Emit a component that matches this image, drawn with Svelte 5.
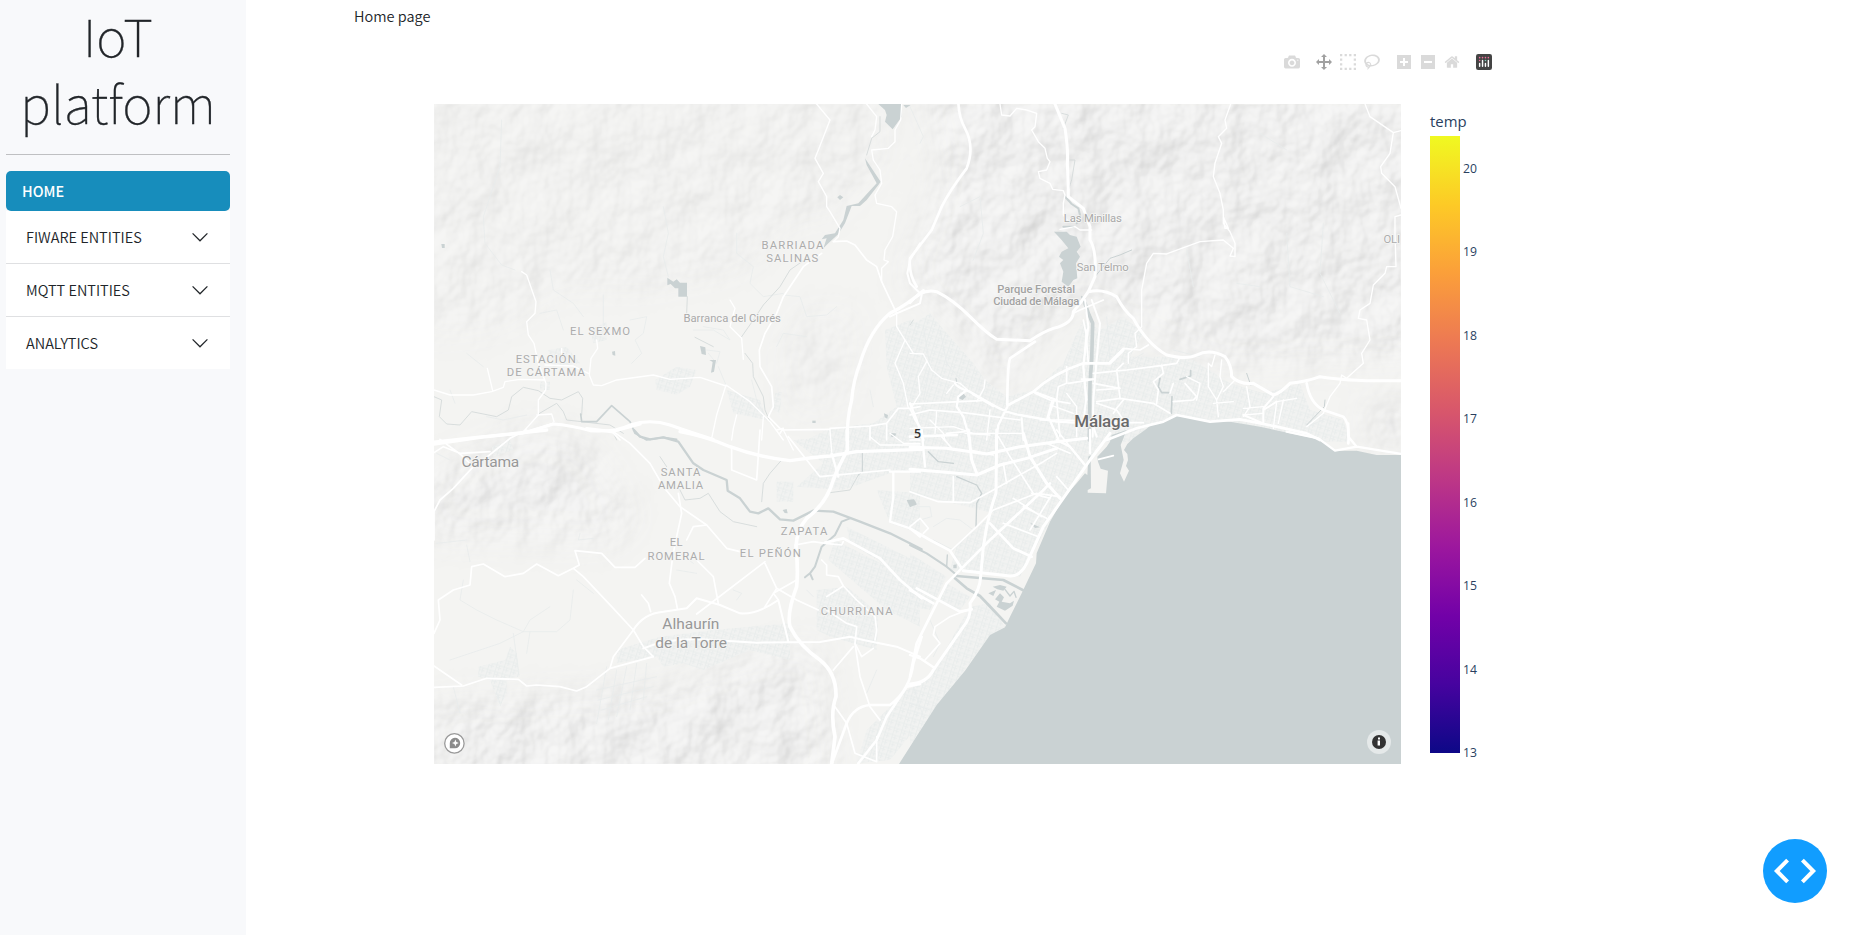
<script>
  const entries = ['FIWARE ENTITIES', 'MQTT ENTITIES', 'ANALYTICS'];
  const ticks = [20, 19, 18, 17, 16, 15, 14, 13];

  const flip = 'matrix(1 0 0 -1 0 850)';
  const tools = [
    [
      { name: 'Download plot', w: 1000, d: 'm500 450c-83 0-150-67-150-150 0-83 67-150 150-150 83 0 150 67 150 150 0 83-67 150-150 150z m400 150h-120c-16 0-34 13-39 29l-31 93c-6 15-23 28-40 28h-340c-16 0-34-13-39-28l-31-94c-6-15-23-28-40-28h-120c-55 0-100-45-100-100v-450c0-55 45-100 100-100h800c55 0 100 45 100 100v450c0 55-45 100-100 100z m-400-550c-138 0-250 112-250 250 0 138 112 250 250 250 138 0 250-112 250-250 0-138-112-250-250-250z m365 380c-19 0-35 16-35 35 0 19 16 35 35 35 19 0 35-16 35-35 0-19-16-35-35-35z' }
    ],
    [
      { name: 'Pan', w: 1000, on: true, d: 'm1000 350l-187 188 0-125-250 0 0 250 125 0-188 187-187-187 125 0 0-250-250 0 0 125-188-188 186-187 0 125 252 0 0-250-125 0 187-188 188 188-125 0 0 250 250 0 0-126 187 188z' },
      { name: 'Box select', w: 1000, d: 'm0 850l0-143 143 0 0 143-143 0z m286 0l0-143 143 0 0 143-143 0z m285 0l0-143 143 0 0 143-143 0z m286 0l0-143 143 0 0 143-143 0z m-857-286l0-143 143 0 0 143-143 0z m857 0l0-143 143 0 0 143-143 0z m-857-285l0-143 143 0 0 143-143 0z m857 0l0-143 143 0 0 143-143 0z m-857-286l0-143 143 0 0 143-143 0z m286 0l0-143 143 0 0 143-143 0z m285 0l0-143 143 0 0 143-143 0z m286 0l0-143 143 0 0 143-143 0z' },
      { name: 'Lasso select', w: 1031, d: 'm1018 538c-36 207-290 336-568 286-277-48-473-256-436-463 10-57 36-108 76-151-13-66 11-137 68-183 34-28 75-41 114-42l-55-70 0 0c-2-1-3-2-4-3-10-14-8-34 5-45 14-11 34-8 45 4 1 1 2 3 2 5l0 0 113 140c16 11 31 24 45 40 4 3 6 7 8 11 48-3 100 0 151 9 278 48 473 255 436 462z m-624-379c-80 14-149 48-197 96 42 42 109 47 156 9 33-26 47-66 41-105z m-187-74c-19 16-33 37-39 60 50-32 109-55 174-68-42-25-95-24-135 8z m360 75c-34-7-69-9-102-8 8 62-16 128-68 170-73 59-175 54-244-5-9 20-16 40-20 61-28 159 121 317 333 354s407-60 434-217c28-159-121-318-333-355z' }
    ],
    [
      { name: 'Zoom in', w: 875, d: 'm1 787l0-875 875 0 0 875-875 0z m687-500l-187 0 0-187-125 0 0 187-188 0 0 125 188 0 0 187 125 0 0-187 187 0 0-125z' },
      { name: 'Zoom out', w: 875, d: 'm0 788l0-876 875 0 0 876-875 0z m688-500l-500 0 0 125 500 0 0-125z' },
      { name: 'Reset view', w: 928.6, d: 'm786 296v-267q0-15-11-26t-25-10h-214v214h-143v-214h-214q-15 0-25 10t-11 26v267q0 1 0 2t0 2l321 264 321-264q1-1 1-4z m124 39l-34-41q-5-5-12-6h-2q-7 0-12 3l-386 322-386-322q-7-4-13-4-7 2-12 7l-35 41q-4 5-3 13t6 12l401 334q18 15 42 15t43-15l136-114v109q0 8 5 13t13 5h107q8 0 13-5t5-13v-227l122-102q5-5 6-12t-4-13z' }
    ]
  ];

  // Map quadrants. Each holds its own origin; geometry is stored at 3 units per pixel.
  const quads = [
    {
      x: 430, y: 100,
      urban: [
        'M1365 690L1440 660 1470 670V1020H1130L1200 985 1330 970 1400 920 1370 800Z',
        'M675 840L740 800 800 810 780 860 740 885 680 870Z',
        'M890 870L990 900 1010 960 910 940Z', 'M355 750L410 740 450 790 370 800Z',
        'M480 690L530 665 530 720 490 730Z', 'M1035 880L1055 875 1050 940 1030 930Z', 'M330 845H360V870H330Z'
      ],
      water: [
        'M1345 12L1413 12 1415 50 1388 88 1365 65 1370 45 1365 30ZM1420 15H1442L1428 24Z',
        'M712 533L730 545 740 538 750 548 771 548V590H745V565H735L722 552 712 556Z',
        'M1305 175L1352 245 1345 255 1310 300 1290 318 1265 318 1245 370 1225 402 1195 430 1180 445 1190 415 1175 418 1185 405 1215 400 1240 360 1250 318 1285 310 1340 250 1310 195Z',
        'M810 738L826 742 828 765 815 762Z', 'M838 780H858L852 815 843 818 848 786Z',
        'M546 755L555 753 556 767 548 765Z', 'M34 432H44V444H36Z', 'M1222 292L1230 285 1240 292 1230 300Z',
        'M1362 940L1374 945 1372 956 1364 952Z', 'M1147 962H1157V969H1147Z', 'M1383 1000L1398 1003 1394 1012 1384 1010Z'
      ],
      river: [
        [5, 'M452 942L455 965 500 965 545 917 600 965 615 1000 650 1020 700 1012 740 1018']
      ],
      stream: [
        'M12 890L35 900 28 950 50 972 90 975 125 935 200 950 235 930 245 890 280 862 325 872 360 895 395 900 445 875 458 895 455 945',
        'M320 945L380 910 400 935 410 960 455 965 540 975 580 1000',
        'M795 712L850 740M1130 475L1080 510 1050 560 1000 615 970 660 935 710M945 760L968 790 970 830 1000 890 1005 930 1020 965M772 590L770 640M1350 50V95L1325 115 1310 165'
      ],
      lane: [
        'M215 60L210 200 160 350 165 430 215 495 255 510M360 510L370 570 430 610 460 650M520 585V690M600 660L650 650 640 700 615 720 635 760 605 790M700 320L715 400 700 470 715 530M920 400V460L970 500 960 550 1000 590 1060 580M1060 585L1110 590 1130 650 1190 645 1220 620M75 910L60 870M170 950L220 960 290 945M790 690L850 690 900 720 880 690 820 680M865 800L888 855M965 840L980 900 1010 960M110 760L160 800M330 640L380 630 400 690',
        'M1040 740L1060 700 1130 710M1320 870L1330 920M1440 20L1480 110 1470 130M830 750L870 755 860 790 835 760'
      ],
      minor: [
        [4, 'M275 515L290 525 318 605 315 640 290 665 295 705 312 730 325 790 348 850 347 870 325 900 325 945 280 995M12 870L60 885 130 885 185 875 220 862 225 845 270 838 345 840M172 805L188 872'],
        [4, 'M320 945L365 942 372 965M345 795L430 798 475 820M500 720L503 745 483 775 478 825 490 855 515 857 560 840 670 825 720 838 810 832 888 858'],
        [4, 'M888 855L860 945 845 1015M888 855L960 905 1020 965 1060 1020M1000 950L995 1020'],
        [4, 'M1160 12L1200 60 1165 150 1155 175 1180 220 1165 245 1190 290 1190 320 1200 335 1230 385 1225 410 1210 425'],
        [5, 'M1210 425L1250 423 1275 435 1310 480 1340 500 1355 545 1400 640M1175 460L1120 500 1060 590 1040 640 1005 700 988 750 990 800 1025 860 1030 920 1015 950 1055 990 1200 988'],
        [4, 'M1310 12L1340 50 1335 90 1325 110M1415 12L1412 60 1395 90V125L1375 145 1325 150 1330 180 1350 210 1355 250 1335 285 1340 310 1385 320 1400 335 1388 410 1365 450 1362 480 1375 485 1355 505 1355 545'],
        [4, 'M900 600L915 625 905 660 900 680 935 715 940 778M920 945L910 985 905 1020M395 745V765M1400 640L1400 680 1450 760M1425 720L1395 790 1420 850 1435 925'],
        [5, 'M275 1000L370 970M545 995L570 1020M1200 985L1320 978 1370 970 1405 925 1440 925 1470 920M1440 925L1455 960 1470 980M1370 970V1020M1320 980V1020M1040 990L1060 985 1050 1000']
      ],
      major: [
        [9, 'M12 1026L140 1012 275 1000Q330 985 370 972Q420 975 480 992Q550 998 600 975Q660 955 720 975Q790 1000 850 1018'],
        [10, 'M1480 572Q1430 615 1380 640Q1320 690 1290 790Q1270 840 1265 900Q1250 960 1252 1022'],
        [6, 'M1470 430L1440 480 1432 520 1440 550 1475 585 1470 610 1400 640 1380 650']
      ]
    },
    {
      x: 910, y: 100,
      urban: [
        'M0 680L60 640 110 700 190 790 225 840 290 890 370 870 460 790 500 700 520 660 570 690 640 650 700 700 660 770 760 770 850 780 960 850 1060 880 1170 850 1200 930 1300 960 1320 1025H0Z'
      ],
      water: [
        'M432 395L470 395 480 405 500 410 512 440 500 455 510 470 498 490 502 535 490 540 475 560 455 545 460 515 450 490 460 480 447 470 455 455 475 445 455 420Z',
        'M148 885L160 880 168 890 158 900 146 895Z'
      ],
      river: [
        [6, 'M465 290L485 312 505 325 510 345 500 370M460 380H490'],
        [11, 'M525 610L535 640 548 670 545 780 540 850 538 1020'],
        [5, 'M750 835L745 860 755 878 780 878M810 838L842 828V812M786 890L784 940M515 590L525 610'],
        [3, 'M555 530L600 475 630 465 665 450M1010 820L1022 855M1245 900L1243 920 1190 975M138 835L142 860']
      ],
      stream: ['M455 40L475 45 460 85M480 180H495L485 240 475 270M0 675L10 660'],
      lane: [
        'M150 320L210 290 220 400 190 480M40 680L60 800 40 900M90 690L110 790 160 850M490 740L530 770M590 650L600 780M600 700L650 710M650 790L700 760M790 750L870 770M1130 400L1140 560 1240 590M1240 370L1230 520 1290 640M980 550L1050 560M830 450L850 560M1050 100L1130 150M1190 980L1240 960'
      ],
      minor: [
        [4, 'M270 12L275 45 300 48 320 25 350 30 380 40 375 80 365 90 385 125 405 145 412 175 420 185 410 210 385 215 390 235 420 250 428 268 460 272 465 285 460 310V345L475 365'],
        [4, 'M450 388L495 380 510 390 545 390M962 12L945 60 950 85 925 110 935 130 915 190 910 230 930 280 940 330 940 370 960 395 975 430V470L960 468 970 445 940 420 870 425 770 462 730 460 710 490 695 570V680L675 700 680 740 655 760 655 790M940 350L955 385 945 385Z'],
        [4, 'M1365 12L1380 50 1450 98 1473 92M1450 98L1440 160 1412 200 1415 220 1455 260 1473 325M1473 345L1455 350 1455 400 1458 500 1430 500 1425 520 1390 555 1380 610 1350 630 1345 655 1370 660 1380 720 1355 760 1360 790 1310 835 1295 825 1290 850 1260 890 1240 940 1190 980'],
        [4, 'M0 760L40 762 65 810 95 835 150 850 190 885 250 920M50 785L25 830 30 880 0 930M130 855L110 880M225 840L222 865 200 905'],
        [5, 'M0 912L150 905 215 902M0 945L60 930 160 938 330 960M490 640L510 630 580 600M520 660L528 700 535 790M600 785L640 745 690 750 715 735'],
        [5, 'M470 800V850L445 860 440 900M475 850L550 838M550 820L600 815 650 810 730 800 800 790 808 775M640 790L620 810 630 895 560 905M560 870L630 865 550 850M630 895L730 910 780 940M755 795L760 820 730 845 745 870 740 910M790 850L780 880M825 850L860 890 850 900 790 905'],
        [5, 'M375 880L420 900 480 910M425 905L410 960M440 900L450 1010M390 960L460 960 640 968 700 968M640 900L620 925 610 940M560 910L620 930 640 960M530 690L520 800 530 900'],
        [4, 'M915 765L905 800 895 790 895 860 920 900 925 950M935 780L930 830 940 860 920 900M975 840L940 875M910 910L970 905M1010 860L1020 920 1000 950M860 900L870 850 830 830M1160 895L1100 905 1090 985M1120 900L1105 970M1060 920L1000 925M1060 940L1000 945'],
        [4, 'M60 960L100 1000 105 1020M165 1000L240 1005M240 930L230 1020M80 935L75 1000M0 985L130 980 190 1000 260 1000 340 1000M420 915L490 940M470 880L500 920V1010']
      ],
      major: [
        [8, 'M145 0Q145 50 165 85Q195 140 170 205Q120 270 95 320L65 390 0 475Q-5 520 20 560'],
        [9, 'M0 608Q35 565 80 575Q130 600 180 650Q230 700 260 718L360 722Q400 695 430 685Q490 670 490 635L510 610 535 575Q580 565 620 590Q640 630 670 655Q710 730 770 765Q830 780 860 765Q900 745 945 770Q965 795 965 830Q990 855 1030 850L1090 885Q1110 880 1140 850Q1190 845 1230 830 1320 845 1475 842'],
        [9, 'M430 0L465 85Q475 150 472 190 475 250 475 290L520 325 540 380V420Q560 450 555 530L535 575'],
        [8, 'M375 725L300 775Q292 800 292 915M0 1010L140 1005M295 915L370 875Q430 820 520 790H600L640 750'],
        [7, 'M135 850Q145 865 180 875L240 910Q290 940 330 945L440 965 620 975M170 870L145 890 140 920 160 950 180 1020M370 875L440 900M430 905L415 950 445 1018M292 920L265 975 258 1020M0 910L20 960 40 1020'],
        [6, 'M525 600L535 680 520 800 528 900 520 970M545 600L570 670 558 800 550 900 548 1010'],
        [8, 'M1190 850Q1200 910 1240 930L1300 950Q1320 970 1315 1030M590 1020L680 985 760 965 800 945 900 965 990 958 1100 980 1190 1000 1230 1020'],
        [6, 'M1090 890L1060 925V970M335 955L340 1020M515 838H550M550 980L560 1010M1100 905L1060 930M1060 970L1000 945']
      ]
    },
    {
      x: 430, y: 430,
      urban: [
        'M1215 330L1470 460V590L1370 540 1195 390Z', 'M1250 290L1470 400V470L1260 340Z',
        'M560 660L690 620 850 600 1080 580V690L960 660 820 720 760 700 700 710 680 680 560 700Z',
        'M1160 480L1250 470 1310 520 1345 560 1340 660 1200 620 1160 600Z', 'M1040 155H1090V215H1040Z',
        'M1090 30L1470 0V120L1380 130 1240 180 1100 170 1180 100Z', 'M1340 180L1470 190V310L1380 280Z',
        'M1430 780L1470 760V880L1380 990 1280 1000 1310 900Z',
        'M145 710L225 690 240 650 260 670 270 740 180 750 145 740Z', 'M180 750H230V790L210 830Z', 'M185 50L240 30 250 60 190 80Z'
      ],
      water: [
        'M1430 210L1452 208 1460 222 1440 232Z', 'M1058 240L1070 237 1073 250 1064 249Z', 'M1383 10H1398L1394 18 1385 18Z',
        'M1410 1002L1470 905V1002Z'
      ],
      river: [
        [7, 'M612 0L630 20 660 28 700 22 745 35 790 100 820 120 890 150 893 182 930 205 960 245 985 250 1015 235 1050 268 1090 272 1150 242 1210 245 1290 275 1380 310 1475 358'],
        [6, 'M1260 265L1235 275 1215 315 1175 350 1155 410 1140 430 1125 442M1140 430L1148 448'],
        [3, 'M1297 70V125L1285 135']
      ],
      stream: ['M1055 90L1020 130 1000 160 995 215M1285 135L1260 180 1200 188M545 0L560 30M710 110L690 80M750 180L765 210 810 205 835 190 870 245 910 275 980 290'],
      lane: [
        'M20 340L110 330M110 345L120 395M100 450L90 510 140 540 200 570 280 605 380 605 420 570 430 480M280 605L210 640 60 690M250 610L265 720M280 605L300 570 360 530M300 605L290 670M20 70L60 90M450 310L445 330 490 325M440 450L490 490M70 770L90 850M200 790L210 820M910 480L935 490 920 510M1130 480L1150 500M1340 720L1310 790',
        'M500 780L680 740M505 810L670 770M515 840L650 800M530 710L500 880M560 720L535 870M590 710L560 860M620 700L600 840M650 700L640 810M740 420L800 430M750 370L790 400'
      ],
      minor: [
        [5, 'M12 68L40 50 90 70 180 65M30 28L90 72 130 110 70 175 30 210 12 245M160 90L240 25 290 0M12 245V330M550 5L600 40 660 100 700 170 750 230 830 285 890 355 930 365'],
        [5, 'M745 190L755 250 740 320 728 380 718 460 735 500 742 535M770 330L790 290 830 285M800 390L850 440 865 520'],
        [5, 'M12 610L30 570 25 510 70 480 120 465 125 410 160 402 225 440 280 430 320 402 385 437 430 415 460 440 545 530 610 600 640 650 670 680M430 415L448 405 435 362 515 370 555 412 615 412 645 385'],
        [5, 'M610 600L550 680 540 715 470 770 440 783 390 770 320 765 290 768 265 748 170 745 100 768 12 772M12 708L95 765'],
        [6, 'M610 600Q640 550 700 545L770 535 800 505 870 525 930 550Q980 555 1045 510L1075 635M640 655Q720 620 850 630L980 638 1170 636 1260 620 1300 630 1400 650 1470 680'],
        [5, 'M1045 510L1030 490 1100 450M1005 400L1040 475 1100 510 1165 540M1005 530L1040 475M1005 395L800 552M540 715L670 680M635 495L655 520 662 545'],
        [5, 'M1095 345L1150 335 1185 340 1235 345 1240 335M1175 390L1190 405 1190 435 1225 440 1240 468 1280 510 1335 560 1340 600 1335 630M1240 468L1190 500M1190 540L1250 580 1280 590 1275 640 1295 680 1330 655'],
        [5, 'M1275 640L1290 740 1320 830 1350 870M1270 650L1210 720M1215 830L1250 880 1275 970 1340 995 1340 920M990 0L980 150 905 120V50M1075 20L1170 140 1380 120'],
        [4, 'M1060 0L1090 60M1380 10L1420 40H1470M1200 0L1205 65M1320 20L1350 45H1470']
      ],
      major: [
        [10, 'M12 42L150 22 350 0M470 -4L545 5 630 -18M750 5Q830 20 900 50 980 80 1080 92 1150 82 1200 78L1280 65 1475 58'],
        [11, 'M1252 0V60Q1225 110 1210 150 1190 220 1130 265 1100 300 1098 350 1105 420 1100 470 1070 550 1080 590 1110 650 1170 690 1220 730 1218 800 1200 850 1215 920L1205 1002'],
        [8, 'M1185 338L1240 325 1350 385 1410 450 1475 505M1205 1002L1250 880Q1270 830 1320 825L1380 825Q1440 780 1450 700L1475 620M1285 1000L1340 930 1370 860 1430 770 1470 762'],
        [7, 'M1380 125H1470M1390 125V200L1380 275 1440 295 1470 320M1205 70L1225 140']
      ]
    },
    {
      x: 910, y: 430,
      urban: [
        'M0 0H600L460 200 330 440 120 420 140 350 250 250 130 220 0 190Z',
        'M0 370L110 440 60 540 0 530Z', 'M110 460L180 500 150 540 90 510Z', 'M180 530L240 520 285 590 240 615 0 950V780L60 740Z'
      ],
      water: [
        'M-33 1002L0 950 80 825 165 722 240 615 285 592 300 560 335 490 378 400 380 370 420 275 460 205 500 160 525 130 532 135 535 80 542 75 543 175 533 180 533 188 588 190 594 122 572 116 564 95 562 80 590 50 600 35 605 15 650 0 632 45 641 90 630 130 642 155 657 122 648 108 654 90 652 72 642 60 652 42 670 25 705 0 730 -20 800 -42 880 -30 960 -25 1050 -10 1140 10 1225 28 1275 62 1340 62 1400 75 1475 75V1002Z'
      ],
      lagoon: [
        'M248 470L270 465 290 470 280 482 262 478ZM235 490L258 480 250 498ZM270 490L282 502 275 515 300 520 312 512 308 527 285 542 260 530 268 515 255 508Z',
        'M0 210L15 213 20 225 0 228Z', 'M130 405L140 403 140 415 130 415Z', 'M360 278L390 292 375 294Z'
      ],
      river: [
        [6, 'M0 345L50 370 110 410 140 435'],
        [8, 'M140 438L280 450 338 480M135 445L170 475 210 498 250 540 288 580'],
        [4, 'M55 65L85 95 130 100M140 140L200 165 215 190 200 220 198 290M112 375L110 410M285 478L300 498 312 484 318 502']
      ],
      stream: [],
      lane: ['M70 290L110 265 150 270 190 300 130 360M70 330L130 360M20 230L60 230 65 260 30 270M60 570L90 640 70 680M0 820L60 840M10 770L40 860'],
      minor: [
        [5, 'M0 185L85 215 180 218 250 180 400 95 440 70M95 20L130 60M125 360L200 290 250 240 380 190 450 200M130 140V215M566 88L610 77'],
        [5, 'M0 290L30 265 55 295 40 310M280 280L385 320M340 230L410 265M310 205L395 260M425 195L360 300M365 190L420 205M185 535L120 560 75 590 70 615 90 640 45 690'],
        [5, 'M110 10L165 5M265 20L300 80 370 190M440 0L520 100M410 40L480 70M440 140L475 180M280 100L290 160M180 60L250 75M0 30H30']
      ],
      major: [
        [9, 'M0 52L110 55 230 72 330 50 440 35 530 25M260 0L258 190Q230 270 220 350L212 440Q210 480 180 520 185 560 160 590L70 720Q50 760 0 762'],
        [9, 'M340 10L360 80 410 160 450 205M175 0L185 90 200 130M0 118L90 125 200 135 270 105 350 85 440 55M600 10L540 90 470 190 400 290 350 400Q330 440 300 438L160 422'],
        [8, 'M0 295L60 330 120 362 155 415 110 460 60 560 20 640 0 740M155 415L240 330 390 190 420 160M0 480L70 520M20 475L150 545 185 538M240 280L310 355 365 380'],
        [7, 'M35 0L45 110M440 30L480 50 525 105M0 675L30 685 75 715M540 0V70M1315 -20L1315 20 1340 50 1475 72M1130 5L1225 25 1275 62 1340 50']
      ]
    }
  ];

  const labels = [
    ['hood', 792.4, 249.4, 62, 'BARRIADA'], ['hood', 792.3, 262, 52, 'SALINAS'],
    ['hood', 600, 334.6, 60, 'EL SEXMO'], ['hood', 545.7, 363, 60, 'ESTACIÓN'], ['hood', 545.8, 376.3, 78, 'DE CÁRTAMA'],
    ['place', 732.2, 321.5, 97.5, 'Barranca del Ciprés'], ['place', 1092.8, 221.8, 58, 'Las Minillas'], ['place', 1102.7, 270.8, 52, 'San Telmo'],
    ['park', 1036.2, 293.2, 77.7, 'Parque Forestal'], ['park', 1036.3, 305.3, 86, 'Ciudad de Málaga'],
    ['city', 1102, 426.6, 55.5, 'Málaga'], ['hood', 1391.8, 243.2, 16.5, 'OLI'],
    ['town', 490.3, 467, 57.7, 'Cártama'], ['hood', 680.5, 475.7, 39.7, 'SANTA'], ['hood', 680.5, 489.2, 45, 'AMALIA'],
    ['hood', 676.2, 546.4, 13, 'EL'], ['hood', 676, 559.8, 57, 'ROMERAL'], ['hood', 804, 534.6, 46.7, 'ZAPATA'],
    ['hood', 770.3, 557.3, 61, 'EL PEÑÓN'], ['hood', 856.7, 615.3, 72, 'CHURRIANA'],
    ['town', 690.8, 629.3, 57, 'Alhaurín'], ['town', 691.2, 648.2, 71.7, 'de la Torre']
  ];
</script>

<div class="page">
  <aside>
    <h1>IoT platform</h1>
    <hr />
    <nav>
      <a class="home" href="#home">HOME</a>
      <div class="accordion">
        {#each entries as e}
          <button>
            <span>{e}</span>
            <svg width="16" height="16" viewBox="0 0 16 16"><path d="M.6 4.4L8 11.8l7.4-7.4" fill="none" stroke="#212529" stroke-width="1.25" /></svg>
          </button>
        {/each}
      </div>
    </nav>
  </aside>

  <main>
    <p>Home page</p>
    <div class="modebar">
      {#each tools as group}
        <div class="group">
          {#each group as t}
            <svg class:on={t.on} width="16" height="16" viewBox="0 0 {t.w} 1000" role="img" aria-label={t.name}>
              <path d={t.d} transform={flip} />
            </svg>
          {/each}
        </div>
      {/each}
      <div class="group">
        <svg class="logo" width="16" height="16" viewBox="0 0 132 132">
          <rect width="132" height="132" rx="18" fill="#444" />
          {#each [[30, 30], [54, 30], [78, 30], [102, 30], [30, 54]] as [cx, cy]}
            <circle {cx} {cy} r="6.5" fill="#ef6f9b" />
          {/each}
          <circle cx="78" cy="54" r="6.5" fill="#80cfbe" />
          <path d="M30 78v24M78 78v24M54 54v48M102 54v48" stroke="#fff" stroke-width="12" stroke-linecap="round" />
        </svg>
      </div>
    </div>

    <div class="plot">
      <svg class="map" width="967" height="660" viewBox="434 104 967 660">
        <defs>
          <filter id="relief" x="0" y="0" width="100%" height="100%" color-interpolation-filters="sRGB">
            <feTurbulence type="fractalNoise" baseFrequency="0.021 0.019" numOctaves="4" seed="7" result="n" />
            <feDiffuseLighting in="n" surfaceScale="9" diffuseConstant="1" lighting-color="#fff" result="l">
              <feDistantLight azimuth="225" elevation="55" />
            </feDiffuseLighting>
            <feColorMatrix in="l" values="0.17 0 0 0 0.795  0.17 0 0 0 0.795  0.17 0 0 0 0.793  0 0 0 0 1" />
            <feGaussianBlur stdDeviation="0.7" />
          </filter>
          <filter id="soft" x="-20%" y="-20%" width="140%" height="140%"><feGaussianBlur stdDeviation="16" /></filter>
          <mask id="hills" maskUnits="userSpaceOnUse" x="434" y="104" width="967" height="660">
            <g filter="url(#soft)" fill="#fff">
              <path opacity=".55" d="M400 70H880L890 160 830 220 800 215 740 270 650 290 560 290 500 330 420 340Z" />
              <path opacity=".5" d="M800 310L860 310 850 410 790 420 780 350Z" />
              <path opacity=".9" d="M920 80H1430V360L1300 365 1220 370 1130 330 1080 300 1040 340 1000 400 960 330 900 280 940 180Z" />
              <path opacity=".8" d="M420 470L530 425 590 440 640 520 610 545 420 540Z" />
              <path opacity=".9" d="M660 690L740 660 820 640 840 790 420 790 420 700 600 690Z" />
              <path opacity=".8" d="M1360 400H1420V450H1370ZM1120 370H1160V425H1110Z" />
            </g>
          </mask>
          <pattern id="blocks" width="23" height="21" patternUnits="userSpaceOnUse" patternTransform="rotate(17)">
            <rect width="23" height="21" fill="#f1f2f1" />
            <path d="M0 6H23M7 0V21M16 6V21M7 14H23" fill="none" stroke="#e6ebeb" stroke-width="2.6" />
          </pattern>
        </defs>
        <rect x="434" y="104" width="967" height="660" fill="#f4f4f2" />
        <rect x="434" y="104" width="967" height="660" filter="url(#relief)" mask="url(#hills)" />
        <g class="lines">
          {#each quads as q}
            <g transform="translate({q.x} {q.y}) scale(.33333)">
              {#each q.urban as d}<path {d} fill="url(#blocks)" opacity=".85" />{/each}
              {#each q.lane as d}<path {d} stroke="#e8ecec" stroke-width="2.5" />{/each}
              {#each q.stream as d}<path {d} stroke="#d3d8d8" stroke-width="2.5" />{/each}
            </g>
          {/each}
          {#each quads as q}
            <g transform="translate({q.x} {q.y}) scale(.33333)">
              {#each [...q.water, ...(q.lagoon ?? [])] as d}<path {d} fill="#cad2d3" />{/each}
              {#each q.river as [w, d]}<path {d} stroke="#cad2d3" stroke-width={w} />{/each}
            </g>
          {/each}
          {#each quads as q}
            <g transform="translate({q.x} {q.y}) scale(.33333)" stroke="#fff">
              {#each q.minor as [w, d]}<path {d} stroke-width={w} />{/each}
              {#each q.major as [w, d]}<path {d} stroke-width={w} />{/each}
            </g>
          {/each}
        </g>
        {#each labels as [kind, x, y, w, text]}
          <text class={kind} {x} {y} textLength={w}>{text}</text>
        {/each}
        <text class="count" x="917.7" y="438.2">5</text>
        <g>
          <circle cx="454.4" cy="743.4" r="9.7" fill="#fff" stroke="#999" stroke-width="1.3" />
          <path d="M449.8 748.2v-5a5.2 5.2 0 1 1 5.2 5Z" fill="#8c8c8c" />
          <path d="M455.4 739.6l1 2.4 2.4 1-2.4 1-1 2.4-1-2.4-2.4-1 2.4-1Z" fill="#fff" />
          <circle cx="1379" cy="742" r="12" fill="#fff" fill-opacity=".5" />
          <circle cx="1379" cy="742" r="7" fill="#333" />
          <path d="M1378 737.4h2v2h-2ZM1377.6 740.6h2.4v5h-2.4Z" fill="#fff" />
        </g>
      </svg>
      <div class="scale">
        <div class="caption">temp</div>
        <div class="bar"></div>
        <ol>
          {#each ticks as t}<li>{t}</li>{/each}
        </ol>
      </div>
    </div>
  </main>

  <button class="debug" aria-label="Debug menu">
    <svg width="64" height="64" viewBox="0 0 64 64"><path d="M24.6 21.2L13.8 32l10.8 10.8M39.4 21.2L50.2 32 39.4 42.8" fill="none" stroke="#fff" stroke-width="4" /></svg>
  </button>
</div>

<style>
  :global(body) { margin: 0; background: #fff; }
  .page {
    position: relative;
    display: flex;
    width: 1857px;
    height: 935px;
    overflow: hidden;
    color: #212529;
    font: 350 14.5px/24px "Noto Sans CJK SC DemiLight", "Noto Sans CJK SC", sans-serif;
  }
  aside { box-sizing: border-box; width: 246px; padding: 1px 16px 0 6px; background: #f8f9fb; }
  h1 {
    margin: 0;
    font-family: "Noto Sans CJK SC", sans-serif;
    font-size: 51.6px;
    line-height: 67px;
    font-weight: 100;
    text-align: center;
    -webkit-text-stroke: .35px #212529;
  }
  hr { margin: 19px 0 16px; border: 0; border-top: 1px solid #bfc0c2; }
  nav { display: flex; flex-direction: column; }
  .home {
    padding: 8px 16px;
    border-radius: 5px;
    background: #178dbc;
    color: #fff;
    font-family: "Noto Sans CJK SC", sans-serif;
    font-size: 14.4px;
    font-weight: 500;
    text-decoration: none;
  }
  .accordion button {
    display: flex;
    align-items: center;
    justify-content: space-between;
    box-sizing: border-box;
    width: 100%;
    height: 53px;
    padding: 0 22px 0 20px;
    border: 0;
    border-bottom: 1px solid #dfe0e2;
    background: #fff;
    color: inherit;
    font: inherit;
  }
  .accordion button:last-child { height: 52px; border-bottom: 0; }
  main { flex: 1; padding: 4px 0 0 108px; }
  p { margin: 0; }
  .modebar { display: flex; gap: 8px; margin: 22px 0 0 926px; height: 24px; }
  .group { display: flex; align-items: center; }
  .group svg { padding: 0 4px; fill: rgba(68, 68, 68, .2); }
  .group svg.on { fill: rgba(68, 68, 68, .5); }
  .plot { display: flex; gap: 29px; margin: 30px 0 0 80px; }
  .map { display: block; }
  .lines { fill: none; stroke-linejoin: round; stroke-linecap: round; }
  .map text {
    text-anchor: middle;
    font-family: Roboto, sans-serif;
    font-weight: 400;
    paint-order: stroke;
    stroke: #f6f6f5;
    stroke-width: 1.6px;
    stroke-linejoin: round;
  }
  .hood { font-size: 11.3px; fill: #acacac; }
  .place { font-size: 11.3px; fill: #a9a9a9; }
  .map .park { font-size: 11.2px; font-weight: 500; fill: #a2a2a2; }
  .town { font-size: 15.5px; fill: #989898; }
  .map .city { font-size: 17px; font-weight: 500; fill: #6a6a6a; }
  .map .count { font: 600 12.5px "Open Sans", sans-serif; fill: #333; }
  .scale {
    display: grid;
    grid-template: 32px 617px / 30px 20px;
    column-gap: 3px;
    color: #2a3f5f;
    font: 400 12.2px/16px "Open Sans", sans-serif;
  }
  .caption { grid-column: 1 / 3; padding-top: 7px; font-size: 14.9px; line-height: 20px; }
  .bar {
    background: linear-gradient(#f0f921, #fdca26 11.11%, #fb9f3a 22.22%, #ed7953 33.33%, #d8576b 44.44%, #bd3786 55.56%, #9c179e 66.67%, #7201a8 77.78%, #46039f 88.89%, #0d0887);
  }
  ol {
    display: flex;
    flex-direction: column;
    justify-content: space-between;
    height: 600px;
    margin: 25px 0 0;
    padding: 0;
    list-style: none;
  }
  .debug {
    position: absolute;
    left: 1763px;
    top: 839px;
    width: 64px;
    height: 64px;
    padding: 0;
    border: 0;
    border-radius: 50%;
    background: #119dff;
  }
  .debug svg { display: block; }
</style>
